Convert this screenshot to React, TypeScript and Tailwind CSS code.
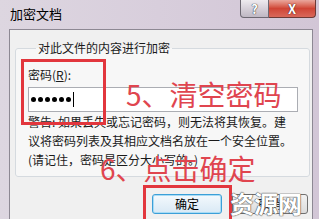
import React from 'react';

const cjk = "font-['Noto_Sans_CJK_SC','Noto_Sans',sans-serif]";

export default function App() {
  return (
    <div className={`relative w-[319px] h-[219px] overflow-hidden bg-gradient-to-r from-[#ddd6e0] via-[#d8cedc] to-[#d2c6d6] ${cjk}`}>
      {/* Title bar */}
      <div className="flex h-[29px] items-start">
        <span className="pl-[10px] pt-[5px] text-[13px] leading-[18px] text-black">加密文档</span>
        <div className="ml-auto mr-[3px] flex">
          <button className="flex h-[18px] w-[29px] items-center justify-center rounded-bl-[4px] border border-t-0 border-[#6d6872] bg-gradient-to-b from-[#eeebef] via-[#d6d0d9] to-[#bfb8c3] text-[13px] font-bold leading-none text-white [text-shadow:0_0_1px_#333,0_0_1px_#333]">
            ?
          </button>
          <button className="flex h-[18px] w-[47px] items-center justify-center rounded-br-[4px] border border-t-0 border-l-0 border-[#6d3a36] bg-gradient-to-b from-[#e9a79d] via-[#cf4435] to-[#d9685a] text-[13px] font-bold leading-none text-white [text-shadow:0_0_1px_#4a1a14,0_0_1px_#4a1a14]">
            X
          </button>
        </div>
      </div>

      {/* Client area */}
      <div className="ml-[9px] mr-[6px] h-[200px] border border-b-0 border-[#8d8893] bg-[#f0f0f0]">
        <fieldset className="ml-[5px] mr-[2px] mt-[10px] h-[137px] rounded-[3px] border border-[#d5dadf] bg-[#f7f7f7] pl-[12px]">
          <legend className="ml-[8px] px-[2px] text-[12px] leading-[16px] text-[#1a1a1a]">对此文件的内容进行加密</legend>
          <div className="mt-[11px] text-[12px] leading-[16px] text-[#1a1a1a]">
            密码(<span className="underline">R</span>):
          </div>
          {/* password box */}
          <div className="mt-[4px] flex h-[25px] w-[270px] items-center border border-[#abadb3] bg-white pl-[2px]">
            <div className="flex gap-[2px]">
              {[0, 1, 2, 3, 4, 5].map((i) => (
                <span key={i} className="h-[5px] w-[5px] rounded-full bg-black" />
              ))}
            </div>
            <span className="ml-[2px] h-[15px] w-px bg-black" />
          </div>
          <div className="text-[12px] leading-[19px] text-[#1a1a1a]">
            <div>警告: 如果丢失或忘记密码，则无法将其恢复。建</div>
            <div>议将密码列表及其相应文档名放在一个安全位置。</div>
            <div>(请记住，密码是区分大小写的。)</div>
          </div>
        </fieldset>

        <div className="ml-[142px] mt-[17px] flex gap-[10px]">
          <button className="h-[20px] w-[70px] rounded-[3px] border border-[#3c9fd8] bg-gradient-to-b from-[#f4f9fd] to-[#d9e9f5] text-[12px] leading-none text-black shadow-[inset_0_0_0_1px_#a8dcf5]">
            确定
          </button>
          <button className="h-[20px] w-[76px] rounded-[3px] border border-[#707070] bg-gradient-to-b from-[#f2f2f2] to-[#dcdcdc] text-[12px] leading-none text-black">
            取消
          </button>
        </div>
      </div>

      {/* Red annotations */}
      <div className="absolute left-[21px] top-[59px] h-[66px] w-[85px] border-[3px] border-[#e2363d]" />
      <div className="absolute left-[143px] top-[185px] h-[45px] w-[89px] border-[3px] border-[#e2363d]" />
      <div className="absolute left-[126px] top-[80px] whitespace-nowrap text-[28px] leading-[28px] text-[#e0454f]">
        5、清空密码
      </div>
      <div className="absolute left-[100px] top-[154px] whitespace-nowrap text-[28px] leading-[28px] text-[#e0454f]">
        6、点击确定
      </div>

      {/* Watermark */}
      <div className="absolute left-[230px] top-[190px] whitespace-nowrap text-[24px] font-bold leading-[26px] text-white [text-shadow:0_0_1px_#555,0_0_1px_#555,0_0_1px_#555]">
        资源网
      </div>
    </div>
  );
}
